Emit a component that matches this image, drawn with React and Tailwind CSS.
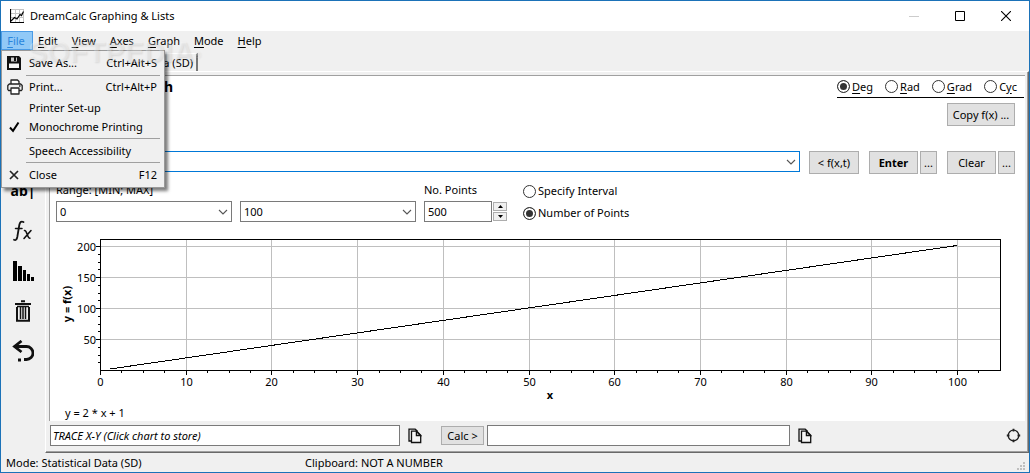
import React from "react";

const MENUS = ["File", "Edit", "View", "Axes", "Graph", "Mode", "Help"];
const X_LABELS = [0, 10, 20, 30, 40, 50, 60, 70, 80, 90, 100];
const Y_LABELS = [50, 100, 150, 200];
const px = (v) => Math.round(100 + v * 8.57) + 0.5;
const py = (v) => Math.round(370 - v * 0.62) + 0.5;

function Access({ text, at = 0 }) {
  return (
    <>
      {text.slice(0, at)}
      <span className="underline underline-offset-2">{text[at]}</span>
      {text.slice(at + 1)}
    </>
  );
}

function Chevron() {
  return (
    <svg className="pointer-events-none absolute top-1/2 right-1 -mt-1 h-2 w-2.5" viewBox="0 0 10 8" aria-hidden="true">
      <path d="M1 2 5 6 9 2" fill="none" stroke="#555" strokeWidth="1.1" />
    </svg>
  );
}

function Combo({ label, value, wrap, border }) {
  return (
    <div className={`relative ${wrap}`}>
      <select
        aria-label={label}
        defaultValue={value}
        className={`block h-[21px] w-full appearance-none border bg-white pr-5 pl-[3px] text-[11px] outline-none ${border}`}
      >
        <option value={value}>{value}</option>
      </select>
      <Chevron />
    </div>
  );
}

function Radio({ name, checked, children }) {
  return (
    <label className="flex items-center gap-0.5 whitespace-nowrap">
      <input
        type="radio"
        name={name}
        defaultChecked={checked}
        className="size-[13px] shrink-0 appearance-none rounded-full border border-[#333] bg-white checked:bg-[#333] checked:shadow-[inset_0_0_0_2px_white]"
      />
      <span>{children}</span>
    </label>
  );
}

function Push({ className, children }) {
  return (
    <button type="button" className={`border border-[#adadad] bg-[#e1e1e1] text-center whitespace-nowrap ${className}`}>
      {children}
    </button>
  );
}

function CopyIcon() {
  return (
    <svg className="h-4 w-[14px]" viewBox="0 0 14 16" fill="none" stroke="#111" strokeWidth="1.3" aria-hidden="true">
      <path d="M3.2 13H1V1.2h6.2l2.3 2" />
      <path d="M3.5 3.2h5.2l4 4v7.3H3.5z" fill="#f6f6f6" />
      <path d="M8.4 3.5v4h4.2z" fill="#eee" />
    </svg>
  );
}

function FileMenu() {
  const item = "flex w-full items-center pr-[7px] text-left";
  const icon = "flex w-[27px] shrink-0 items-center pl-[5px]";
  const line = "mr-1 ml-6 border-[#a0a0a0]";
  return (
    <div
      role="menu"
      className="absolute top-full left-0 z-20 w-[164px] border border-[#999] bg-[#f0f0f0] text-black shadow-[3px_3px_3px_rgba(0,0,0,0.5)]"
    >
      <button type="button" role="menuitem" className={`h-6 ${item}`}>
        <span className={icon}>
          <svg className="size-[14px]" viewBox="0 0 14 14" aria-hidden="true">
            <path d="M0 0h12l2 2v12H0z" fill="#111" />
            <path d="M2 7.500h10V12H2z" fill="#f8f8f8" />
            <path d="M4 1.500h6v4H4z" fill="#ccc" />
            <path d="M7 1h2v4H7z" fill="#111" />
          </svg>
        </span>
        <span className="flex-1">Save As...</span>
        <span>Ctrl+Alt+S</span>
      </button>
      <hr className={line} />
      <button type="button" role="menuitem" className={`h-[22px] ${item}`}>
        <span className={icon}>
          <svg className="size-4" viewBox="0 0 16 16" fill="none" stroke="#222" strokeWidth="1.3" strokeLinejoin="round" aria-hidden="true">
            <path d="M4 5V1h6.500L12 2.500V5" fill="#fff" />
            <path d="M4 11.500H1.500L.8 10.500V6.500L2.300 5h11.400l1.500 1.500v4l-.7 1H12" />
            <path d="M4 9h8v6H4z" fill="#fff" />
            <path d="M12 7h1.500" />
          </svg>
        </span>
        <span className="flex-1">Print...</span>
        <span>Ctrl+Alt+P</span>
      </button>
      <button type="button" role="menuitem" className={`h-[19px] ${item}`}>
        <span className={icon} />
        <span>Printer Set-up</span>
      </button>
      <button type="button" role="menuitemcheckbox" aria-checked="true" className={`h-[19px] ${item}`}>
        <span className={icon}>
          <svg className="ml-0.5 h-3 w-3" viewBox="0 0 12 12" aria-hidden="true">
            <path d="M1 6.500 4 9.800 9.500 1.500" fill="none" stroke="#000" strokeWidth="2" />
          </svg>
        </span>
        <span>Monochrome Printing</span>
      </button>
      <div className="h-0.5" />
      <hr className={line} />
      <button type="button" role="menuitem" className={`h-[23px] ${item}`}>
        <span className={icon} />
        <span>Speech Accessibility</span>
      </button>
      <hr className={line} />
      <button type="button" role="menuitem" className={`h-6 ${item}`}>
        <span className={icon}>
          <svg className="ml-0.5 size-[10px]" viewBox="0 0 10 10" aria-hidden="true">
            <path d="M1 1 9 9M9 1 1 9" stroke="#222" strokeWidth="1.700" />
          </svg>
        </span>
        <span className="flex-1">Close</span>
        <span>F12</span>
      </button>
    </div>
  );
}

function TitleBar() {
  return (
    <header className="flex h-[30px] items-center bg-white pl-[9px] text-black">
      <svg className="size-[14px]" viewBox="0 0 14 14" fill="none" aria-hidden="true">
        <path d="M1 .5h13M1 4.500h13M1 8.500h13M5.500 0v13M9.500 0v13M13.500 0v13" stroke="#c4c4c4" />
        <path d="M.5 0v13.500H14" stroke="#000" strokeWidth="1.200" />
        <path d="M1 12 4.500 8.500 7 10 10 5.500 11.500 6.500 13.500 2.500" stroke="#000" strokeWidth="1.200" />
      </svg>
      <h1 className="ml-1.5 flex-1">DreamCalc Graphing &amp; Lists</h1>
      <div className="flex">
        <button type="button" aria-label="Minimize" disabled className="flex h-7 w-[46px] items-center justify-center">
          <svg className="size-[10px]" viewBox="0 0 10 10" aria-hidden="true"><path d="M0 5.500h10" stroke="#ccc" /></svg>
        </button>
        <button type="button" aria-label="Maximize" className="flex h-7 w-[46px] items-center justify-center">
          <svg className="size-[10px]" viewBox="0 0 10 10" aria-hidden="true"><path d="M.5.5h9v9h-9z" fill="none" stroke="#000" /></svg>
        </button>
        <button type="button" aria-label="Close" className="flex h-7 w-[46px] items-center justify-center">
          <svg className="size-[10px]" viewBox="0 0 10 10" aria-hidden="true"><path d="M0 0 10 10M10 0 0 10" stroke="#000" strokeWidth="1.100" /></svg>
        </button>
      </div>
    </header>
  );
}

function MenuBar() {
  return (
    <nav className="relative flex h-5 items-start">
      {MENUS.map((name) =>
        name === "File" ? (
          <div key={name} className="relative">
            <button type="button" aria-haspopup="menu" aria-expanded="true" className="h-[19px] w-8 border border-[#4a9be6] bg-[#91c9f7] pr-0.5 text-[#2a86dc]">
              <Access text={name} />
            </button>
            <FileMenu />
          </div>
        ) : (
          <button key={name} type="button" className="h-[19px] px-[7px] first-of-type:pl-[5px]">
            <Access text={name} />
          </button>
        )
      )}
      <span
        aria-hidden="true"
        className="pointer-events-none absolute top-[5px] left-[27px] z-30 font-['Liberation_Sans',sans-serif] text-[29px] leading-8 font-bold text-white/30 select-none [text-shadow:1px_1px_2px_rgba(0,0,0,0.1)]"
      >
        SOFTPEDIA<sup className="text-[9px]">®</sup>
      </span>
    </nav>
  );
}

function SideBar() {
  const button = "flex h-10 w-full items-center justify-center";
  return (
    <aside className="w-11 shrink-0 pt-[120px]">
      <button type="button" className={`${button} text-sm font-bold`}>ab|</button>
      <button type="button" aria-label="Function" className={button}>
        <svg className="size-6" viewBox="0 0 24 24" fill="none" stroke="#111" strokeLinecap="round" aria-hidden="true">
          <path d="M12.500 3c-2.500-1.300-3.700.4-4.200 3L6.300 18c-.5 2.600-1.600 3.600-3.300 2.800" strokeWidth="1.800" />
          <path d="M4.500 9.500h6.500" strokeWidth="1.500" />
          <path d="M13.500 11.500c2.500-.8 2.500 8 5.500 7.700M20 11.500l-7 8" strokeWidth="1.600" />
        </svg>
      </button>
      <button type="button" aria-label="Histogram" className={button}>
        <svg className="h-[22px] w-[22px]" viewBox="0 0 22 22" aria-hidden="true">
          <path d="M1 1h4v20H1zM6 6h4v15H6zM11 10h3v11h-3zM15 14h3v7h-3zM19 17h3v4h-3z" fill="#000" />
        </svg>
      </button>
      <button type="button" aria-label="Delete" className={button}>
        <svg className="h-[22px] w-[18px]" viewBox="0 0 18 22" fill="none" stroke="#111" aria-hidden="true">
          <path d="M1 4h16M7 1.200h4" strokeWidth="2" />
          <path d="M3 7v13.800h12V7" strokeWidth="2" />
          <path d="M3 6.500h12M6.500 7v12M9 7v12M11.500 7v12" strokeWidth="1.500" />
        </svg>
      </button>
      <button type="button" aria-label="Undo" className={button}>
        <svg className="size-[22px]" viewBox="0 0 22 22" fill="none" stroke="#111" aria-hidden="true">
          <path d="M2 6.500h12.500a6 6 0 0 1 0 13H12" strokeWidth="2.800" />
          <path d="M9.500 1 2.500 6.500l7 5.500" strokeWidth="2.800" />
          <path d="M6 18.500h3v3H6z" fill="#111" stroke="none" />
        </svg>
      </button>
    </aside>
  );
}

function Chart() {
  const minorX = [];
  for (let v = 2.5; v < 105; v += 2.5) if (v % 10) minorX.push(v);
  const minorY = [];
  for (let v = 12.5; v < 200; v += 12.5) if (v % 50) minorY.push(v);
  return (
    <svg
      role="img"
      aria-label="Graph of y = 2 * x + 1"
      className="block h-auto w-full font-['Noto_Sans',sans-serif] text-[11px]"
      viewBox="50 226 975 195"
    >
      <g shapeRendering="crispEdges" fill="none" stroke="#bfbfbf">
        {X_LABELS.slice(1).map((v) => <path key={v} d={`M${px(v)} 240V370`} />)}
        {Y_LABELS.map((v) => <path key={v} d={`M101 ${py(v)}H1000`} />)}
      </g>
      <g shapeRendering="crispEdges" fill="none" stroke="#000">
        <path d="M100.500 239.500H1000.500V370.500H100.500z" />
        {X_LABELS.map((v) => <path key={v} d={`M${px(v)} 371v4`} />)}
        {minorX.map((v) => <path key={v} d={`M${px(v)} 371v2`} />)}
        {Y_LABELS.map((v) => <path key={v} d={`M96 ${py(v)}h4`} />)}
        {minorY.map((v) => <path key={v} d={`M98 ${py(v)}h2`} />)}
        <path d="M110 369 957 245.500" />
      </g>
      <g fill="#000">
        {X_LABELS.map((v) => <text key={v} x={px(v)} y="386" textAnchor="middle">{v}</text>)}
        {Y_LABELS.map((v) => <text key={v} x="96" y={py(v) + 4} textAnchor="end">{v}</text>)}
        <text x="550" y="399" textAnchor="middle" className="font-bold">x</text>
        <text transform="translate(71 304) rotate(-90)" textAnchor="middle" className="font-bold">y = f(x)</text>
        <text x="65" y="417">y = 2 * x + 1</text>
      </g>
    </svg>
  );
}

function Settings() {
  return (
    <div className="flex gap-2 pt-2 pb-1 pl-1.5">
      <fieldset className="flex flex-col gap-1">
        <legend className="mb-1 h-[15px] leading-[15px]">Range: [MIN; MAX]</legend>
        <div className="flex gap-2">
          <Combo label="Minimum" value="0" wrap="w-44" border="border-[#7a7a7a]" />
          <Combo label="Maximum" value="100" wrap="w-44" border="border-[#7a7a7a]" />
        </div>
      </fieldset>
      <div>
        <label htmlFor="points" className="mb-1 block h-[15px] leading-[15px]">No. Points</label>
        <div className="flex items-center">
          <input id="points" type="text" defaultValue="500" className="h-[21px] w-[68px] border border-[#7a7a7a] bg-white pl-[3px] outline-none" />
          <div className="ml-px flex w-[14px] flex-col gap-px">
            <button type="button" aria-label="Increase" className="flex h-[9px] items-center justify-center border border-[#adadad] bg-[#f0f0f0]">
              <svg className="h-[3px] w-[5px]" viewBox="0 0 5 3" aria-hidden="true"><path d="M0 3 2.500 0 5 3z" /></svg>
            </button>
            <button type="button" aria-label="Decrease" className="flex h-[9px] items-center justify-center border border-[#adadad] bg-[#f0f0f0]">
              <svg className="h-[3px] w-[5px]" viewBox="0 0 5 3" aria-hidden="true"><path d="M0 0 2.500 3 5 0z" /></svg>
            </button>
          </div>
        </div>
      </div>
      <div className="ml-2 flex flex-col gap-1.5 pt-px">
        <Radio name="mode">Specify Interval</Radio>
        <Radio name="mode" checked>Number of Points</Radio>
      </div>
    </div>
  );
}

export default function App() {
  return (
    <div className="flex min-h-screen flex-col border border-[#1b72b8] bg-[#f0f0f0] font-['Noto_Sans',sans-serif] text-[11px] leading-4 text-black">
      <TitleBar />
      <MenuBar />
      <div className="flex flex-1">
        <SideBar />
        <div className="flex min-w-0 flex-1 flex-col">
          <div className="flex h-5 items-end">
            <button type="button" className="h-[18px] w-[153px] border-t border-r-2 border-t-white border-r-[#777] pr-[3px] text-right">
              Statistical Data (SD)
            </button>
          </div>
          <main className="flex flex-1 flex-col border border-t-white border-r-[#696969] border-b-[#696969] border-l-white">
            <div className="flex flex-1 flex-col border-r border-b border-[#a0a0a0] pt-[3px] pr-0.5 pl-[3px]">
              <section className="flex-1 border-t border-l border-[#a0a0a0] bg-white">
                <div className="flex h-[22px] items-start justify-between pr-px">
                  <h2 className="w-[123px] text-right text-sm leading-[22px] font-bold">Function Graph</h2>
                  <div className="flex h-full items-center gap-3 border-b border-black pr-[7px]">
                    <Radio name="angle" checked><Access text="Deg" /></Radio>
                    <Radio name="angle"><Access text="Rad" /></Radio>
                    <Radio name="angle"><Access text="Grad" /></Radio>
                    <Radio name="angle"><Access text="Cyc" at={1} /></Radio>
                  </div>
                </div>
                <div className="flex justify-end pt-[5px] pr-[10px]">
                  <Push className="h-[23px] w-[68px]">Copy f(x) ...</Push>
                </div>
                <div className="mt-[25px] flex items-start pr-[10px] pl-1.5">
                  <Combo label="Function" value="" wrap="flex-1" border="border-[#0078d7]" />
                  <Push className="ml-[9px] h-[23px] w-[50px]">&lt; f(x,t)</Push>
                  <Push className="ml-[10px] h-[23px] w-[49px] font-bold">Enter</Push>
                  <Push className="ml-0.5 h-[23px] w-[17px]">...</Push>
                  <Push className="ml-[10px] h-[23px] w-[49px]">Clear</Push>
                  <Push className="ml-0.5 h-[23px] w-[17px]">...</Push>
                </div>
                <Settings />
                <Chart />
              </section>
              <div className="flex h-[30px] items-center pb-px pl-px">
                <input
                  type="text"
                  aria-label="Trace"
                  defaultValue="TRACE X-Y (Click chart to store)"
                  className="h-[21px] w-[350px] border border-[#7a7a7a] bg-white pl-0.5 italic outline-none"
                />
                <button type="button" aria-label="Copy trace" className="ml-2 w-[14px]"><CopyIcon /></button>
                <Push className="ml-[19px] h-[19px] w-[43px]">Calc &gt;</Push>
                <input type="text" aria-label="Result" className="ml-[3px] h-[21px] w-[303px] border border-[#7a7a7a] bg-white outline-none" />
                <button type="button" aria-label="Copy result" className="ml-2 w-[14px]"><CopyIcon /></button>
                <button type="button" aria-label="Target" className="mr-1 ml-auto">
                  <svg className="size-[15px]" viewBox="0 0 15 15" fill="none" stroke="#222" aria-hidden="true">
                    <circle cx="7.500" cy="7.500" r="5.300" strokeWidth="1.300" />
                    <path d="M7.500.8v2.700M7.500 11.500v2.700M.8 7.500h2.700M11.500 7.500h2.700" strokeWidth="1.800" />
                  </svg>
                </button>
              </div>
            </div>
          </main>
        </div>
      </div>
      <footer className="flex h-[19px] items-center pl-[5px]">
        <p className="w-[299px]">Mode: Statistical Data (SD)</p>
        <p className="flex-1">Clipboard: NOT A NUMBER</p>
        <svg className="mr-0.5 size-[10px] self-end" viewBox="0 0 10 10" fill="#bfbfbf" aria-hidden="true">
          <path d="M6 0h2v2H6zM3 3h2v2H3zM6 3h2v2H6zM0 6h2v2H0zM3 6h2v2H3zM6 6h2v2H6z" />
        </svg>
      </footer>
    </div>
  );
}
